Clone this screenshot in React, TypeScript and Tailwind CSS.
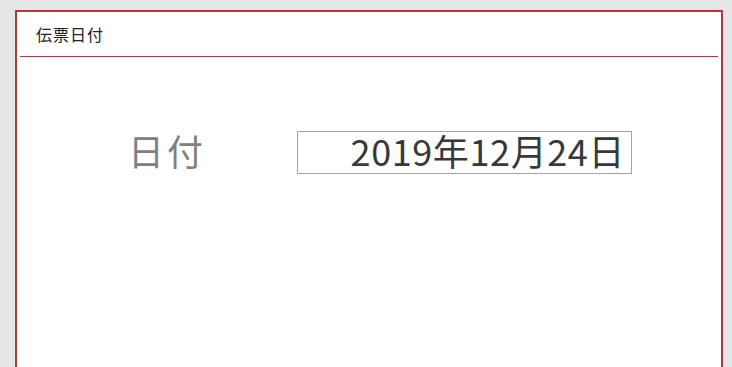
export default function App() {
  return (
    <div className="h-[367px] overflow-hidden bg-[#e6e6e6] pt-[10px] pl-[15px] pr-[9px] font-['Noto_Sans_CJK_JP','Liberation_Sans',sans-serif]">
      <div className="h-[420px] border-2 border-[#b03a3b] bg-white">
        <div className="flex h-[44px] items-center pl-[19px] text-[16px] tracking-[1px] text-[#222]">
          伝票日付
        </div>
        <div className="mx-[3px] h-px bg-[#b03a3b]" />
        <div className="flex items-center pt-[74px]">
          <div className="w-[280px] pb-[6px] pl-[111px] text-[36px] leading-none tracking-[3px] text-[#808080]">
            日付
          </div>
          <div className="flex h-[43px] w-[335px] items-center justify-end border border-[#a3a3a3] pb-[5px] pr-[6px] text-[36px] leading-none tracking-[0.6px] text-[#383838]">
            2019年12月24日
          </div>
        </div>
      </div>
    </div>
  )
}
